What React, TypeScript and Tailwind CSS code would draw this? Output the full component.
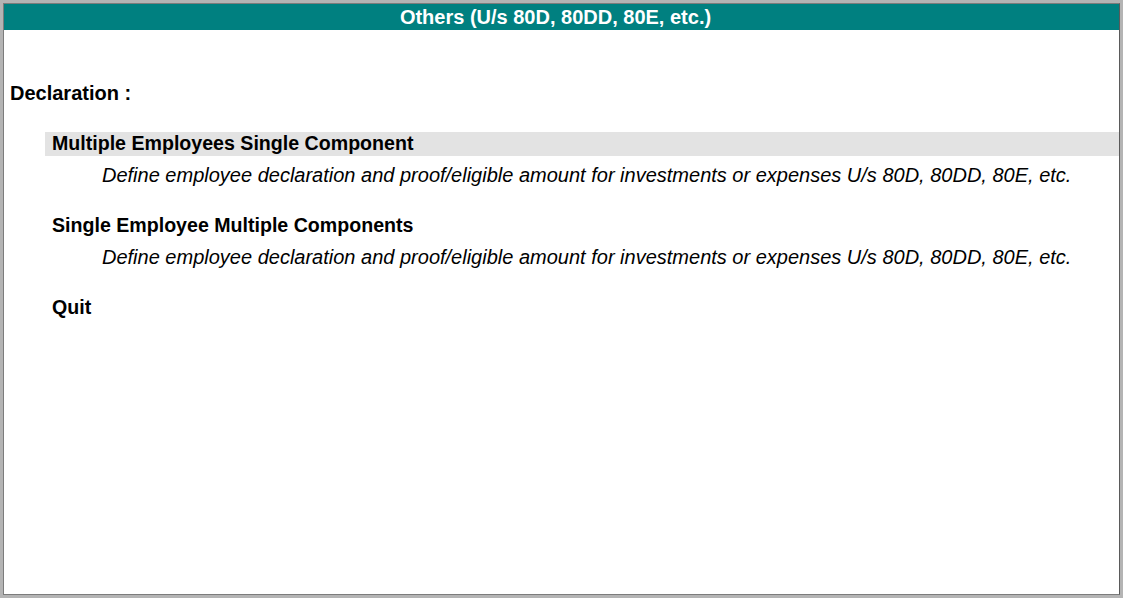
export default function App() {
  const desc =
    'Define employee declaration and proof/eligible amount for investments or expenses U/s 80D, 80DD, 80E, etc.'
  const items = [
    { title: 'Multiple Employees Single Component', desc, active: true },
    { title: 'Single Employee Multiple Components', desc, active: false },
  ]

  return (
    <div
      className="w-[1123px] h-[598px] bg-[#b4b4b4] p-[3px]"
      style={{ fontFamily: '"Liberation Sans", Arial, sans-serif' }}
    >
      <div className="h-full flex flex-col bg-white border border-[#7c7c7c] border-r-[#5a5a5a]">
        {/* Title bar */}
        <div className="h-[26px] bg-[#008080] flex items-center justify-center pr-[12px] text-white font-bold text-[20px] leading-none">
          Others (U/s 80D, 80DD, 80E, etc.)
        </div>

        <div className="pt-[51px] pl-[6px] text-black">
          <div className="h-[24px] flex items-center font-bold text-[20px]">Declaration :</div>

          <div className="mt-[27px] ml-[35px]">
            {items.map((item) => (
              <div key={item.title} className="mb-[27px]">
                <div
                  className={`h-[24px] flex items-center pl-[7px] font-bold text-[19.6px] ${
                    item.active ? 'bg-[#e3e3e3]' : ''
                  }`}
                >
                  {item.title}
                </div>
                <div className="mt-[7px] h-[24px] flex items-center pl-[57px] italic text-[20px]">
                  {item.desc}
                </div>
              </div>
            ))}
            <div className="h-[24px] flex items-center pl-[7px] font-bold text-[19.6px]">Quit</div>
          </div>
        </div>
      </div>
    </div>
  )
}
